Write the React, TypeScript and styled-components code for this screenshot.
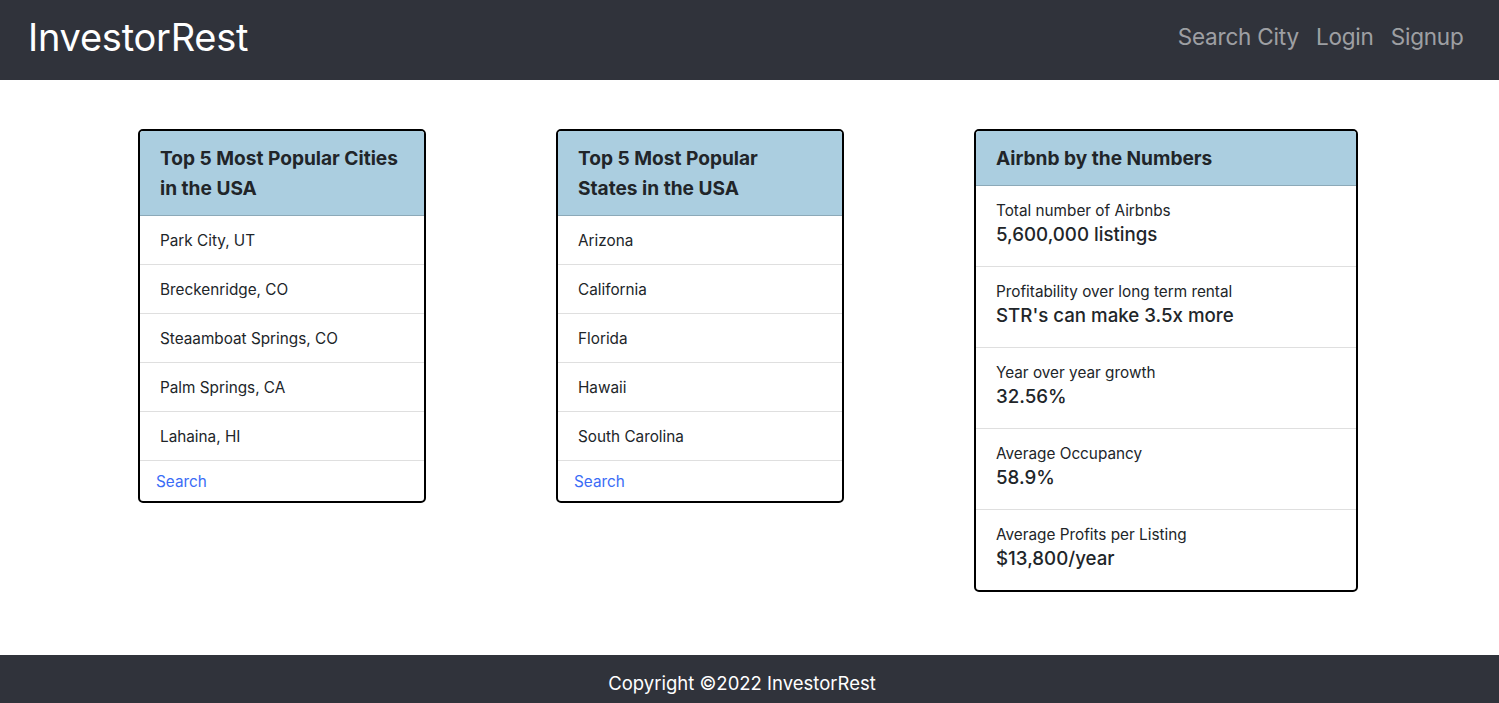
import React from "react";
import styled, { createGlobalStyle } from "styled-components";

const Global = createGlobalStyle`
  html, body { margin: 0; padding: 0; }
  body {
    font-family: Inter, "Noto Sans", "Liberation Sans", sans-serif;
    color: #212529;
    background: #fff;
  }
  * { box-sizing: border-box; }
`;

const Header = styled.header`
  height: 80px;
  background: #30333b;
  display: flex;
  align-items: center;
  justify-content: space-between;
  padding: 0 27px 6px 28px;
`;

const Brand = styled.a`
  color: #fff;
  font-size: 38px;
  line-height: 48px;
  letter-spacing: -0.25px;
  text-decoration: none;
`;

const Nav = styled.nav`
  display: flex;
  align-items: center;
`;

const NavLink = styled.a`
  color: rgba(255, 255, 255, 0.55);
  font-size: 22.5px;
  line-height: 32px;
  padding: 0 8.5px;
  text-decoration: none;
  letter-spacing: -0.2px;
`;

const Main = styled.main`
  display: flex;
  align-items: flex-start;
  gap: 130px;
  padding: 49px 0 63px 138px;
`;

const Card = styled.section<{ $w: number }>`
  width: ${(p) => p.$w}px;
  border: 2px solid #000;
  border-radius: 5px;
  overflow: hidden;
  background: #fff;
`;

const CardHeader = styled.h2`
  margin: 0;
  background: #abcee0;
  padding: 12px 23px 12px 20px;
  font-size: 19.1px;
  line-height: 30px;
  font-weight: 700;
  color: #212529;
  border-bottom: 1px solid rgba(0, 0, 0, 0.175);
`;

const List = styled.ul`
  list-style: none;
  margin: 0;
  padding: 0;
`;

const Item = styled.li`
  padding: 13px 20px 11px;
  font-size: 15.3px;
  line-height: 24px;
  border-bottom: 1px solid rgba(0, 0, 0, 0.125);
`;

const StatItem = styled.li`
  padding: 13px 20px 11px;
  border-bottom: 1px solid rgba(0, 0, 0, 0.125);
  &:last-child { border-bottom: none; }
`;

const StatLabel = styled.div`
  font-size: 15.3px;
  line-height: 24px;
`;

const StatValue = styled.div`
  font-size: 18.7px;
  line-height: 24px;
  font-weight: 500;
  margin-bottom: 8px;
`;

const CardFooter = styled.div`
  padding: 9px 16px 7px;
`;

const SearchLink = styled.a`
  color: #3b6cf6;
  font-size: 15.3px;
  line-height: 24px;
  text-decoration: none;
`;

const Footer = styled.footer`
  background: #30333b;
  color: #fff;
  text-align: center;
  padding: 16px 15px 16px 0;
  font-size: 18.5px;
  line-height: 24px;
`;

const cities = ["Park City, UT", "Breckenridge, CO", "Steaamboat Springs, CO", "Palm Springs, CA", "Lahaina, HI"];
const states = ["Arizona", "California", "Florida", "Hawaii", "South Carolina"];
const stats = [
  ["Total number of Airbnbs", "5,600,000 listings"],
  ["Profitability over long term rental", "STR's can make 3.5x more"],
  ["Year over year growth", "32.56%"],
  ["Average Occupancy", "58.9%"],
  ["Average Profits per Listing", "$13,800/year"],
];

function ListCard({ title, items }: { title: string; items: string[] }) {
  return (
    <Card $w={288}>
      <CardHeader>{title}</CardHeader>
      <List>
        {items.map((i) => (
          <Item key={i}>{i}</Item>
        ))}
      </List>
      <CardFooter>
        <SearchLink href="#">Search</SearchLink>
      </CardFooter>
    </Card>
  );
}

export default function App() {
  return (
    <>
      <Global />
      <Header>
        <Brand href="#">InvestorRest</Brand>
        <Nav>
          <NavLink href="#">Search City</NavLink>
          <NavLink href="#">Login</NavLink>
          <NavLink href="#">Signup</NavLink>
        </Nav>
      </Header>
      <Main>
        <ListCard title="Top 5 Most Popular Cities in the USA" items={cities} />
        <ListCard title="Top 5 Most Popular States in the USA" items={states} />
        <Card $w={384}>
          <CardHeader>Airbnb by the Numbers</CardHeader>
          <List>
            {stats.map(([l, v]) => (
              <StatItem key={l}>
                <StatLabel>{l}</StatLabel>
                <StatValue>{v}</StatValue>
              </StatItem>
            ))}
          </List>
        </Card>
      </Main>
      <Footer>Copyright ©2022 InvestorRest</Footer>
    </>
  );
}
